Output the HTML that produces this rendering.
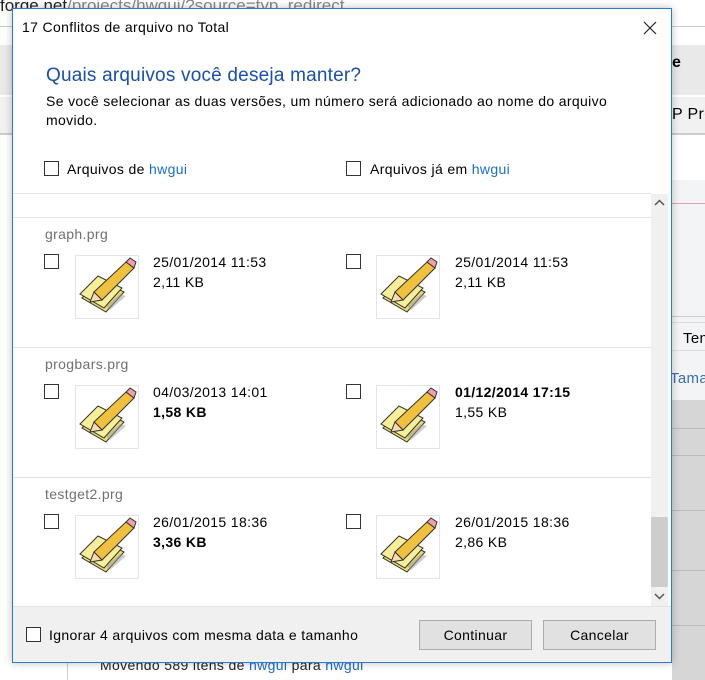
<!DOCTYPE html>
<html><head><meta charset="utf-8"><style>
*{margin:0;padding:0;box-sizing:border-box}
body{width:705px;height:680px;overflow:hidden;background:#fff;font-family:"Liberation Sans",sans-serif;position:relative;font-size:14px;color:#000}
.a{position:absolute}
.cb{position:absolute;width:15px;height:15px;border:1px solid #333;background:#fff}
.ic{position:absolute;width:64px;height:64px;border:1px solid #e4e4e4;background:#fff}
.t{position:absolute;font-size:14px;white-space:nowrap;letter-spacing:.35px}
.lnk{color:#1a6fc9}
.sep{position:absolute;left:13px;width:638px;height:1px;background:#e3e3e3}
.btn{position:absolute;width:113px;height:30px;background:#e1e1e1;border:1px solid #adadad;font-size:14px;text-align:center;line-height:28px;letter-spacing:.35px}
</style></head><body>
<div class="a" style="left:0;top:0;width:705px;height:22px;font-size:17px;color:#222;top:-4px">forge.net<span style="color:#888">/projects/hwgui/?source=typ_redirect</span></div>
<div class="a" style="left:0;top:26px;width:705px;height:1px;background:#ccc"></div>
<div class="a" style="left:0;top:45px;width:705px;height:50px;background:#e9e9e9"></div>
<div class="a" style="left:0;top:97px;width:705px;height:38px;background:#f1f1f1;border-bottom:2px solid #ccc"></div>
<div class="t" style="left:672px;top:54px;font-weight:bold;font-size:16px">e</div>
<div class="t" style="left:672px;top:106px;font-size:16px">P Pro</div>
<div class="a" style="left:672px;top:180px;width:33px;height:320px;background:#f3f4f6"></div>
<div class="a" style="left:672px;top:203px;width:33px;height:1px;background:#e8a0b8"></div>
<div class="a" style="left:672px;top:316px;width:33px;height:1px;background:#ccc"></div>
<div class="a" style="left:672px;top:322px;width:33px;height:1px;background:#ddd"></div>
<div class="t" style="left:683px;top:330px;font-size:15px">Ten</div>
<div class="a" style="left:672px;top:350px;width:33px;height:1px;background:#ddd"></div>
<div class="t" style="left:670px;top:370px;font-size:15px;color:#3a6ea8">Tama</div>
<div class="a" style="left:672px;top:400px;width:33px;height:280px;background:#d6d6d6"></div>
<div class="a" style="left:672px;top:428px;width:33px;height:1px;background:#bbb"></div>
<div class="a" style="left:672px;top:455px;width:33px;height:1px;background:#bbb"></div>
<div class="a" style="left:672px;top:510px;width:33px;height:1px;background:#bbb"></div>
<div class="a" style="left:672px;top:570px;width:33px;height:1px;background:#bbb"></div>
<div class="a" style="left:672px;top:625px;width:33px;height:1px;background:#bbb"></div>
<div class="a" style="left:67px;top:662px;width:1px;height:18px;background:#ccc"></div>
<div class="t" style="left:100px;top:657px;color:#222">Movendo 589 itens de <span class="lnk">hwgui</span> para <span class="lnk">hwgui</span></div>

<div class="a" style="left:12px;top:8px;width:660px;height:655px;border:1px solid #2b7bd0;background:#fff;box-shadow:0 0 8px rgba(0,0,0,.25)"></div>
<div class="t" style="left:22px;top:19px;font-size:14px">17 Conflitos de arquivo no Total</div>
<svg class="a" style="left:643px;top:21px" width="14" height="14"><path d="M1 1L13 13M13 1L1 13" stroke="#222" stroke-width="1.2"/></svg>
<div class="t" style="left:46px;top:65px;font-size:19px;color:#1a4fa8;letter-spacing:.2px">Quais arquivos você deseja manter?</div>
<div class="t" style="left:46px;top:92px;font-size:14px;line-height:19px;white-space:normal;width:580px">Se você selecionar as duas versões, um número será adicionado ao nome do arquivo movido.</div>
<div class="cb" style="left:44px;top:161px"></div>
<div class="t" style="left:67px;top:161px">Arquivos de <span class="lnk">hwgui</span></div>
<div class="cb" style="left:346px;top:161px"></div>
<div class="t" style="left:370px;top:161px">Arquivos já em <span class="lnk">hwgui</span></div>
<div class="sep" style="top:193px"></div>

<div class="a" style="left:651px;top:194px;width:17px;height:412px;background:#f0f0f0"></div>
<div class="a" style="left:651px;top:517px;width:17px;height:70px;background:#cdcdcd"></div>
<svg class="a" style="left:654px;top:199px" width="11" height="8"><path d="M1 6L5.5 1.5L10 6" stroke="#555" stroke-width="1.5" fill="none"/></svg>
<svg class="a" style="left:654px;top:592px" width="11" height="8"><path d="M1 2L5.5 6.5L10 2" stroke="#555" stroke-width="1.5" fill="none"/></svg>

<svg width="0" height="0" style="position:absolute"><defs><g id="pen">
<path d="M6 42L24 24L48 36L30 56Z" fill="#e8dc70" stroke="#333" stroke-width="1"/>
<path d="M4 38L22 20L46 32L28 52Z" fill="#f6ee9a" stroke="#333" stroke-width="1"/>
<path d="M18 36L50 6L58 12L26 44Z" fill="#f0c040" stroke="#333" stroke-width="1"/>
<path d="M50 6L54 2L60 6L58 12Z" fill="#f0a0a8" stroke="#333" stroke-width="1"/>
<path d="M18 36L26 44L14 46Z" fill="#f8dcb0" stroke="#333" stroke-width="1"/>
<path d="M30 50L44 38L50 40L34 54Z" fill="#999" opacity=".5"/>
</g></defs></svg>

<div class="sep" style="top:217px"></div>
<div class="t" style="left:45px;top:226px;color:#707070">graph.prg</div>
<div class="cb" style="left:44px;top:254px"></div>
<div class="ic" style="left:75px;top:255px"><svg width="62" height="62"><use href="#pen"/></svg></div>
<div class="t" style="left:153px;top:254px">25/01/2014 11:53</div>
<div class="t" style="left:153px;top:274px">2,11 KB</div>
<div class="cb" style="left:346px;top:254px"></div>
<div class="ic" style="left:376px;top:255px"><svg width="62" height="62"><use href="#pen"/></svg></div>
<div class="t" style="left:455px;top:254px">25/01/2014 11:53</div>
<div class="t" style="left:455px;top:274px">2,11 KB</div>

<div class="sep" style="top:347px"></div>
<div class="t" style="left:45px;top:356px;color:#707070">progbars.prg</div>
<div class="cb" style="left:44px;top:384px"></div>
<div class="ic" style="left:75px;top:385px"><svg width="62" height="62"><use href="#pen"/></svg></div>
<div class="t" style="left:153px;top:384px">04/03/2013 14:01</div>
<div class="t" style="left:153px;top:404px;font-weight:bold">1,58 KB</div>
<div class="cb" style="left:346px;top:384px"></div>
<div class="ic" style="left:376px;top:385px"><svg width="62" height="62"><use href="#pen"/></svg></div>
<div class="t" style="left:455px;top:384px;font-weight:bold">01/12/2014 17:15</div>
<div class="t" style="left:455px;top:404px">1,55 KB</div>

<div class="sep" style="top:477px"></div>
<div class="t" style="left:45px;top:486px;color:#707070">testget2.prg</div>
<div class="cb" style="left:44px;top:514px"></div>
<div class="ic" style="left:75px;top:515px"><svg width="62" height="62"><use href="#pen"/></svg></div>
<div class="t" style="left:153px;top:514px">26/01/2015 18:36</div>
<div class="t" style="left:153px;top:534px;font-weight:bold">3,36 KB</div>
<div class="cb" style="left:346px;top:514px"></div>
<div class="ic" style="left:376px;top:515px"><svg width="62" height="62"><use href="#pen"/></svg></div>
<div class="t" style="left:455px;top:514px">26/01/2015 18:36</div>
<div class="t" style="left:455px;top:534px">2,86 KB</div>

<div class="a" style="left:13px;top:606px;width:658px;height:56px;background:#f0f0f0;border-top:1px solid #e3e3e3"></div>
<div class="cb" style="left:26px;top:627px"></div>
<div class="t" style="left:49px;top:627px">Ignorar 4 arquivos com mesma data e tamanho</div>
<div class="btn" style="left:419px;top:620px">Continuar</div>
<div class="btn" style="left:543px;top:620px">Cancelar</div>
</body></html>
